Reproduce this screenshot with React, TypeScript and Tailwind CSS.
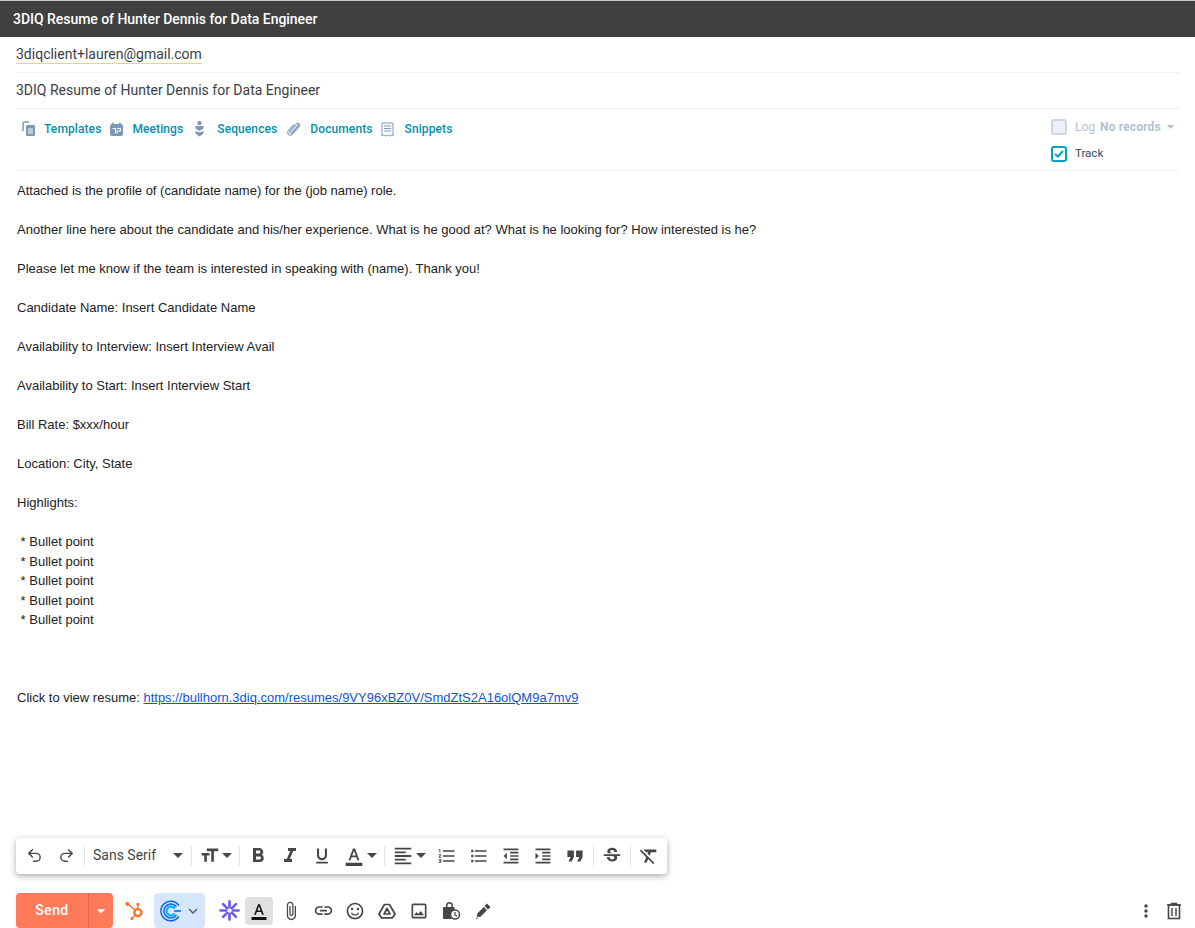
import type { ReactNode } from 'react';
import {
  MdArrowDropDown, MdAttachFile, MdFormatAlignLeft, MdFormatBold, MdFormatClear, MdFormatColorText,
  MdFormatIndentDecrease, MdFormatIndentIncrease, MdFormatItalic, MdFormatListBulleted, MdFormatListNumbered,
  MdFormatQuote, MdFormatSize, MdFormatUnderlined, MdKeyboardArrowDown, MdLink, MdMoreVert,
  MdOutlineImage, MdOutlineSentimentSatisfied, MdStrikethroughS,
} from 'react-icons/md';
import { SiHubspot } from 'react-icons/si';
import { LuUndo2, LuRedo2 } from 'react-icons/lu';

const Sep = () => <div className="w-px h-[20px] bg-[#e4e4e4] mx-[1px] shrink-0" />;

const Btn = ({ children, w = 'w-8' }: { children: ReactNode; w?: string }) => (
  <div className={`${w} h-8 flex items-center justify-center text-[#444746] shrink-0`}>{children}</div>
);

// caret drawn in a narrow box, the triangle may stick out of it
const Caret = ({ w }: { w: string }) => (
  <div className={`${w} flex justify-center shrink-0`}>
    <svg width="10" height="5" viewBox="0 0 10 5" className="shrink-0"><path d="M0 0h10L5 5z" fill="#444746" /></svg>
  </div>
);

// small hubspot-style tool icons
const TemplatesIcon = () => (
  <svg width="16" height="16" viewBox="0 0 16 16" fill="none" className="shrink-0">
    <path d="M2 10V2.5C2 1.700 2.600 1 3.400 1H8" stroke="#7c98b6" strokeWidth="1.500" />
    <rect x="5" y="4" width="9" height="11" rx="1.500" fill="#7c98b6" />
    <path d="M7 8h5M7 10h5M7 12h5" stroke="#fff" strokeWidth="1" />
  </svg>
);
const MeetingsIcon = () => (
  <svg width="15" height="15" viewBox="0 0 15 15" className="shrink-0">
    <rect x="1" y="2" width="13" height="12" rx="2" fill="#7c98b6" />
    <rect x="3" y="0.5" width="2" height="3" rx="1" fill="#7c98b6" />
    <rect x="10" y="0.5" width="2" height="3" rx="1" fill="#7c98b6" />
    <path d="M3.500 6.500h3v5M8 6.500h3.500V9H8v2.500" stroke="#fff" strokeWidth="1" fill="none" />
  </svg>
);
const SequencesIcon = () => (
  <svg width="9" height="16" viewBox="0 0 9 16" className="shrink-0">
    <rect x="2.500" y="0" width="4" height="4" rx="1.500" fill="#7c98b6" />
    <path d="M0.500 5h8v2.500L4.500 10 .5 7.500z" fill="#7c98b6" />
    <path d="M.5 10 4.500 11.500 8.500 10v2.500L4.500 15.500.5 12.500z" fill="#7c98b6" />
  </svg>
);
const DocumentsIcon = () => (
  <svg width="15" height="16" viewBox="0 0 15 16" fill="none" className="shrink-0">
    <path d="M13 3.500 6 11.500c-1 1.200-2.600-.2-1.600-1.400L10.500 3c1.600-1.900 4.300.4 2.700 2.300L6.500 13c-2.400 2.800-6.300-.5-4-3.300L8 3.500" stroke="#8ea6c0" strokeWidth="1.300" />
  </svg>
);
const SnippetsIcon = () => (
  <svg width="13" height="15" viewBox="0 0 13 15" fill="none" className="shrink-0">
    <path d="M1 14V1h11v13l-1.800-1-1.800 1-1.900-1-1.900 1-1.800-1z" stroke="#7c98b6" strokeWidth="1" />
    <path d="M3 4h7M3 6.500h7M3 9h7" stroke="#7c98b6" strokeWidth="1" />
  </svg>
);

const Tool = ({ icon, label, gap }: { icon: ReactNode; label: string; gap: string }) => (
  <div className="flex items-center shrink-0">
    <div className="w-[16px] flex justify-center">{icon}</div>
    <span className={`${gap} text-[12px] font-medium tracking-[0.1px] text-[#0091ae]`}>{label}</span>
  </div>
);

const CalendlyIcon = () => (
  <svg width="22" height="22" viewBox="0 0 22 22" fill="none">
    <path d="M18.800 5.500A9.800 9.800 0 1 0 18.800 16.500" stroke="#0b5fe8" strokeWidth="1.400" />
    <path d="M16.500 6.800A7 7 0 1 0 16.500 15.200" stroke="#0b6bf0" strokeWidth="1.600" />
    <path d="M14.800 8.500A4.500 4.500 0 1 0 14.800 13.500" stroke="#12b5f5" strokeWidth="2.400" />
    <path d="M14 11h7" stroke="#0b6bf0" strokeWidth="1.600" />
  </svg>
);

const Asterisk = () => (
  <svg width="21" height="21" viewBox="0 0 22 22" stroke="#6a5cf0" strokeWidth="2.800" strokeLinecap="round">
    <path d="M11 1.500v6M11 14.500v6M1.500 11h6M14.500 11h6M4.300 4.300l4.200 4.200M13.500 13.500l4.200 4.200M17.700 4.300l-4.200 4.200M8.500 13.500l-4.200 4.200" />
  </svg>
);

const DriveIcon = () => (
  <svg width="18" height="18" viewBox="0 0 18 18" fill="none" stroke="#444746" strokeWidth="1.700" strokeLinejoin="round">
    <path d="M6.500 2.500h5L17 12l-2.500 3.800h-11L1 12z" />
    <path d="M9 6.500 12 12H6z" />
  </svg>
);

const LockClock = () => (
  <svg width="20" height="20" viewBox="0 0 20 20">
    <path d="M5 6V4.500a3.500 3.500 0 0 1 7 0V6h1.500v3a6 6 0 0 0-3 9H3a1 1 0 0 1-1-1V7a1 1 0 0 1 1-1zm1.500 0h4V4.500a2 2 0 0 0-4 0z" fill="#444746" />
    <circle cx="14" cy="13.500" r="4.500" fill="#fff" stroke="#444746" strokeWidth="1.500" />
    <path d="M14 11v3l2 1.200" stroke="#444746" strokeWidth="1.200" fill="none" />
  </svg>
);

const PenIcon = () => (
  <svg width="18" height="18" viewBox="0 0 18 18" fill="#444746">
    <path d="M9.800 5 13 8.200 6.500 14.700 3.800 15 3 14.200l.3-2.700z" />
    <path d="M10.500 4 13 1.500l3.500 3.500L14 7.500z" />
    <path d="M1.500 17l1.500-2 1 1z" />
  </svg>
);

const TrashIcon = () => (
  <svg width="16" height="18" viewBox="0 0 16 18" fill="none" stroke="#444746">
    <path d="M1 3h14M5.500 2.500V1.500h5v1" strokeWidth="1.500" />
    <rect x="2.500" y="3" width="11" height="13.500" strokeWidth="1.600" />
    <path d="M6 6v8M10 6v8" strokeWidth="1.500" />
  </svg>
);

const bodyLines = [
  'Attached is the profile of (candidate name) for the (job name) role.',
  '',
  'Another line here about the candidate and his/her experience. What is he good at? What is he looking for? How interested is he?',
  '',
  'Please let me know if the team is interested in speaking with (name). Thank you!',
  '',
  'Candidate Name: Insert Candidate Name',
  '',
  'Availability to Interview: Insert Interview Avail',
  '',
  'Availability to Start: Insert Interview Start',
  '',
  'Bill Rate: $xxx/hour',
  '',
  'Location: City, State',
  '',
  'Highlights:',
  '',
  '\u00a0* Bullet point',
  '\u00a0* Bullet point',
  '\u00a0* Bullet point',
  '\u00a0* Bullet point',
  '\u00a0* Bullet point',
  '',
  '',
  '',
];

const App = () => {
  return (
    <div className="h-[928px] w-[1195px] flex flex-col bg-white overflow-hidden font-['Roboto',sans-serif]">
      <div className="h-[37px] shrink-0 bg-[#404040] border-t border-[#c8c8c8] flex items-center pl-[13px] text-[14px] font-medium tracking-[-0.04px] text-white">
        3DIQ Resume of Hunter Dennis for Data Engineer
      </div>

      <div className="mx-4 h-[36px] shrink-0 border-b border-[#eeeeee] flex items-start pt-[8px]">
        <span className="text-[14px] leading-[18px] text-[#3c4043] border-b border-[#f0d078]">3diqclient+lauren@gmail.com</span>
      </div>
      <div className="mx-4 h-[36px] shrink-0 border-b border-[#eeeeee] flex items-center text-[14px] text-[#3c4043]">
        3DIQ Resume of Hunter Dennis for Data Engineer
      </div>

      {/* crm tools row */}
      <div className="mx-4 h-[62px] shrink-0 border-b border-[#eaf0f6] flex justify-between">
        <div className="flex items-start pt-[11px] pl-[5px] h-fit">
          <Tool icon={<TemplatesIcon />} label="Templates" gap="ml-[7px]" />
          <div className="w-[7px]" />
          <Tool icon={<MeetingsIcon />} label="Meetings" gap="ml-[8px]" />
          <div className="w-[8px]" />
          <Tool icon={<SequencesIcon />} label="Sequences" gap="ml-[10px]" />
          <div className="w-[8px]" />
          <Tool icon={<DocumentsIcon />} label="Documents" gap="ml-[9px]" />
          <div className="w-[7px]" />
          <Tool icon={<SnippetsIcon />} label="Snippets" gap="ml-[9px]" />
        </div>
        <div className="w-[128px] pt-[10px] text-[12px]">
          <div className="flex items-center h-[16px]">
            <div className="w-[16px] h-[16px] rounded-[3px] bg-[#eaf0f6] border-2 border-[#cbd6e2] shrink-0" />
            <span className="ml-[8px] text-[#b0c1d4]">Log</span>
            <span className="ml-[5px] font-bold tracking-[0.15px] text-[#b0c1d4]">No records</span>
            <svg width="7" height="4" viewBox="0 0 7 4" className="ml-[6px]"><path d="M0 0h7L3.500 4z" fill="#b0c1d4" /></svg>
          </div>
          <div className="flex items-center h-[16px] mt-[11px]">
            <div className="w-[16px] h-[16px] rounded-[3px] bg-white border-2 border-[#00a4bd] flex items-center justify-center shrink-0">
              <svg width="10" height="8" viewBox="0 0 10 8" fill="none"><path d="M1 4l3 2.500L9 1" stroke="#00a4bd" strokeWidth="2" /></svg>
            </div>
            <span className="ml-[8px] text-[11.5px] text-[#33475b]">Track</span>
          </div>
        </div>
      </div>

      {/* message body */}
      <div className="flex-1 pl-[17px] pt-[10px] text-[13px] leading-[19.5px] text-[#222222] font-['Liberation_Sans',sans-serif]">
        {bodyLines.map((line, i) => (
          <div key={i} className="h-[19.5px] whitespace-pre">{line}</div>
        ))}
        <div className="h-[19.5px]">
          Click to view resume:{' '}
          <a className="text-[#1155cc] underline">https://bullhorn.3diq.com/resumes/9VY96xBZ0V/SmdZtS2A16olQM9a7mv9</a>
        </div>
      </div>

      {/* format toolbar */}
      <div className="mx-4 w-[651px] h-[36px] shrink-0 bg-white rounded-[4px] shadow-[0_2px_6px_rgba(60,64,67,0.45)] flex items-center pl-[2px] pb-[1px]">
        <Btn><LuUndo2 size={17} /></Btn>
        <Btn><LuRedo2 size={17} /></Btn>
        <div className="w-[1px] shrink-0" />
        <Sep />
        <div className="w-[80px] pl-[7px] text-[14px] text-[#444746] shrink-0">Sans Serif</div>
        <Caret w="w-[24px]" />
        <Sep />
        <div className="w-[2px] shrink-0" />
        <Btn w="w-[28px]"><MdFormatSize size={21} /></Btn>
        <Caret w="w-[8px]" />
        <div className="w-[7px] shrink-0" />
        <Sep />
        <div className="w-[1px] shrink-0" />
        <Btn><MdFormatBold size={24} /></Btn>
        <Btn><MdFormatItalic size={24} /></Btn>
        <Btn><MdFormatUnderlined size={20} /></Btn>
        <Btn><MdFormatColorText size={20} /></Btn>
        <Caret w="w-[4px]" />
        <div className="w-[9px] shrink-0" />
        <Sep />
        <div className="w-[1px] shrink-0" />
        <Btn><MdFormatAlignLeft size={22} /></Btn>
        <Caret w="w-[4px]" />
        <div className="w-[8px] shrink-0" />
        <Btn><MdFormatListNumbered size={20} /></Btn>
        <Btn><MdFormatListBulleted size={20} /></Btn>
        <Btn><MdFormatIndentDecrease size={20} /></Btn>
        <Btn><MdFormatIndentIncrease size={20} /></Btn>
        <Btn><MdFormatQuote size={26} /></Btn>
        <div className="w-[1px] shrink-0" />
        <Sep />
        <Btn w="w-[34px]"><MdStrikethroughS size={22} /></Btn>
        <Sep />
        <Btn w="w-[34px]"><MdFormatClear size={22} /></Btn>
      </div>

      {/* send row */}
      <div className="mt-[19px] h-[35px] shrink-0 pl-4 pr-[7px] flex items-center">
        <div className="w-[97px] h-[35px] rounded-[4px] bg-[#ff7a59] flex text-white text-[14px] font-medium shrink-0">
          <div className="w-[73px] flex items-center justify-center border-r border-[#e0674a] tracking-[0.4px]">Send</div>
          <div className="flex-1 flex items-center justify-center"><MdArrowDropDown size={20} /></div>
        </div>
        <div className="w-[41px] flex justify-center shrink-0"><SiHubspot size={18} className="text-[#f2762e]" /></div>
        <div className="w-[51px] h-[35px] rounded-[4px] bg-[#d6e6fd] flex items-center pl-[6px] shrink-0">
          <CalendlyIcon />
          <MdKeyboardArrowDown size={18} className="ml-[2px] text-[#5f6368]" />
        </div>
        <div className="w-[40px] flex justify-center shrink-0 pl-[8px]"><Asterisk /></div>
        <div className="w-[28px] h-[28px] rounded-[4px] bg-[#e0e0e0] flex items-center justify-center shrink-0"><MdFormatColorText size={18} className="text-[#111111]" /></div>
        <div className="w-[2px] shrink-0" />
        <Btn><MdAttachFile size={20} /></Btn>
        <Btn><MdLink size={21} /></Btn>
        <Btn><MdOutlineSentimentSatisfied size={20} /></Btn>
        <Btn><DriveIcon /></Btn>
        <Btn><MdOutlineImage size={20} /></Btn>
        <Btn><LockClock /></Btn>
        <Btn><PenIcon /></Btn>
        <div className="flex-1" />
        <Btn w="w-[28px]"><MdMoreVert size={20} /></Btn>
        <Btn w="w-[28px]"><TrashIcon /></Btn>
      </div>
    </div>
  );
};

export default App;
